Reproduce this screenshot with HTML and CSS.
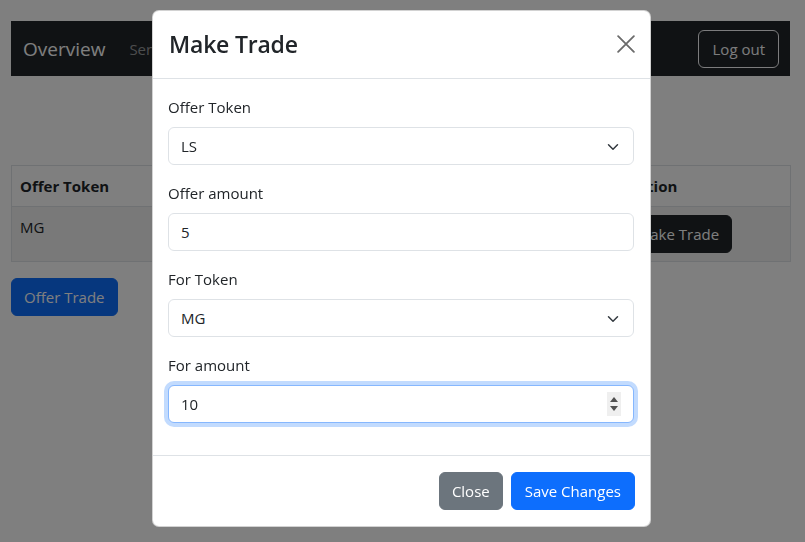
FILE: index.html
```html
<!DOCTYPE html>
<html lang="en">
<head>
<meta charset="utf-8">
<title>Make Trade</title>
<link rel="stylesheet" href="styles.css">
</head>
<body>
<div class="page">
  <nav class="navbar">
    <a class="brand">Overview</a>
    <a class="nav-link">Services</a>
    <span class="spacer"></span>
    <button class="btn btn-outline-light">Log out</button>
  </nav>

  <div class="hero"></div>

  <table class="table">
    <thead>
      <tr>
        <th class="c1">Offer Token</th>
        <th class="c2">Offer Amount</th>
        <th class="c3">For Token</th>
        <th class="c4">For Amount</th>
        <th class="c5">Action</th>
      </tr>
    </thead>
    <tbody>
      <tr class="striped">
        <td>MG</td>
        <td>5</td>
        <td>LS</td>
        <td>10</td>
        <td><button class="btn btn-dark">Take Trade</button></td>
      </tr>
    </tbody>
  </table>

  <button class="btn btn-primary">Offer Trade</button>
</div>

<div class="backdrop"></div>

<div class="modal">
  <div class="modal-content">
    <div class="modal-header">
      <h4 class="modal-title">Make Trade</h4>
      <button class="btn-close" aria-label="Close">
        <svg viewBox="0 0 16 16" width="18" height="18"><path d="M1 1L15 15M15 1L1 15" stroke="#6b6b6b" stroke-width="1.6" fill="none" stroke-linecap="round"/></svg>
      </button>
    </div>
    <div class="modal-body">
      <div class="field">
        <label class="form-label">Offer Token</label>
        <div class="form-select">LS<svg class="chev" viewBox="0 0 16 16" width="16" height="12"><path d="M2 5l6 6 6-6" stroke="#343a40" stroke-width="2" fill="none" stroke-linecap="round" stroke-linejoin="round"/></svg></div>
      </div>
      <div class="field">
        <label class="form-label">Offer amount</label>
        <div class="form-control">5</div>
      </div>
      <div class="field">
        <label class="form-label">For Token</label>
        <div class="form-select">MG<svg class="chev" viewBox="0 0 16 16" width="16" height="12"><path d="M2 5l6 6 6-6" stroke="#343a40" stroke-width="2" fill="none" stroke-linecap="round" stroke-linejoin="round"/></svg></div>
      </div>
      <div class="field">
        <label class="form-label">For amount</label>
        <div class="form-control focused">10
          <span class="spinner">
            <svg viewBox="0 0 14 24" width="14" height="24"><path d="M3 10L7 5L11 10Z" fill="#505050"/><path d="M3 14L7 19L11 14Z" fill="#505050"/></svg>
          </span>
        </div>
      </div>
    </div>
    <div class="modal-footer">
      <button class="btn btn-secondary">Close</button>
      <button class="btn btn-primary btn-save">Save Changes</button>
    </div>
  </div>
</div>
</body>
</html>
```
FILE: styles.css
```css
* { box-sizing: border-box; }
html, body { margin: 0; padding: 0; }
body {
  font-family: "Open Sans", "Noto Sans", sans-serif;
  font-size: 15px;
  line-height: 24px;
  color: #212529;
  background: #fff;
  width: 805px;
  height: 542px;
  overflow: hidden;
}
.page {
  padding: 21px 15px 0 11px;
}
.navbar {
  display: flex;
  align-items: center;
  background: #212529;
  padding: 8px 11px 8px 12px;
  height: 55px;
}
.brand {
  font-size: 19px;
  color: #fff;
  margin-right: 16px;
}
.nav-link {
  color: rgba(255,255,255,.55);
  padding: 8px;
}
.spacer { flex: 1; }
.btn {
  font-family: inherit;
  font-size: 15px;
  line-height: 24px;
  padding: 6px 12px;
  border: 1px solid transparent;
  border-radius: 6px;
  cursor: pointer;
}
.btn-outline-light {
  color: #f8f9fa;
  border-color: #f8f9fa;
  background: transparent;
  padding: 6px 13px 6px 14px;
}
.btn-dark { background: #212529; color: #fff; border-color: #212529; }
.btn-primary { background: #0d6efd; color: #fff; border-color: #0d6efd; }
.btn-secondary { background: #6c757d; color: #fff; border-color: #6c757d; }
.btn-save { padding: 6px 13px; }
.hero { height: 89px; }
.table {
  width: 779px;
  border-collapse: collapse;
  margin-bottom: 16px;
  table-layout: fixed;
}
.table th, .table td {
  border: 1px solid #dee2e6;
  padding: 8px;
  text-align: left;
  vertical-align: top;
}
.table th { font-weight: 700; }
.c1 { width: 152px; }
.c2 { width: 152px; }
.c3 { width: 152px; }
.c4 { width: 153px; }
.c5 { width: 170px; }
.striped td { background: rgba(0,0,0,.05); }

.backdrop {
  position: fixed;
  inset: 0;
  background: rgba(0,0,0,.5);
}
.modal {
  position: fixed;
  inset: 0;
  display: flex;
  justify-content: flex-start;
  align-items: flex-start;
  padding: 10px 0 0 152px;
}
.modal-content {
  width: 499px;
  background: #fff;
  border: 1px solid rgba(0,0,0,.175);
  border-radius: 7px;
  overflow: hidden;
}
.modal-header {
  display: flex;
  align-items: center;
  justify-content: space-between;
  padding: 15px 13px 16px 16px;
  border-bottom: 1px solid #dee2e6;
}
.modal-title {
  margin: 0;
  font-size: 23px;
  font-weight: 600;
  letter-spacing: -0.2px;
  line-height: 36px;
  color: #212529;
}
.btn-close {
  background: none;
  border: 0;
  padding: 0;
  width: 22px;
  height: 22px;
  display: flex;
  align-items: center;
  justify-content: center;
}
.modal-body { padding: 16px 16px 16px 15px; }
.field { margin-bottom: 16px; }
.form-label {
  display: block;
  margin-bottom: 8px;
  color: #212529;
}
.form-control, .form-select {
  position: relative;
  display: flex;
  align-items: center;
  height: 38px;
  padding: 6px 12px;
  border: 1px solid #dee2e6;
  border-radius: 6px;
  color: #212529;
  background: #fff;
}
.chev {
  position: absolute;
  right: 12px;
  top: 13px;
}
.focused {
  border-color: #86b7fe;
  box-shadow: 0 0 0 4px rgba(13,110,253,.25);
}
.spinner {
  position: absolute;
  right: 12px;
  top: 6px;
  width: 14px;
  height: 24px;
  background: #efefef;
  display: flex;
}
.modal-footer {
  display: flex;
  justify-content: flex-end;
  gap: 8px;
  padding: 16px 15px 16px 16px;
  border-top: 1px solid #dee2e6;
}
```
